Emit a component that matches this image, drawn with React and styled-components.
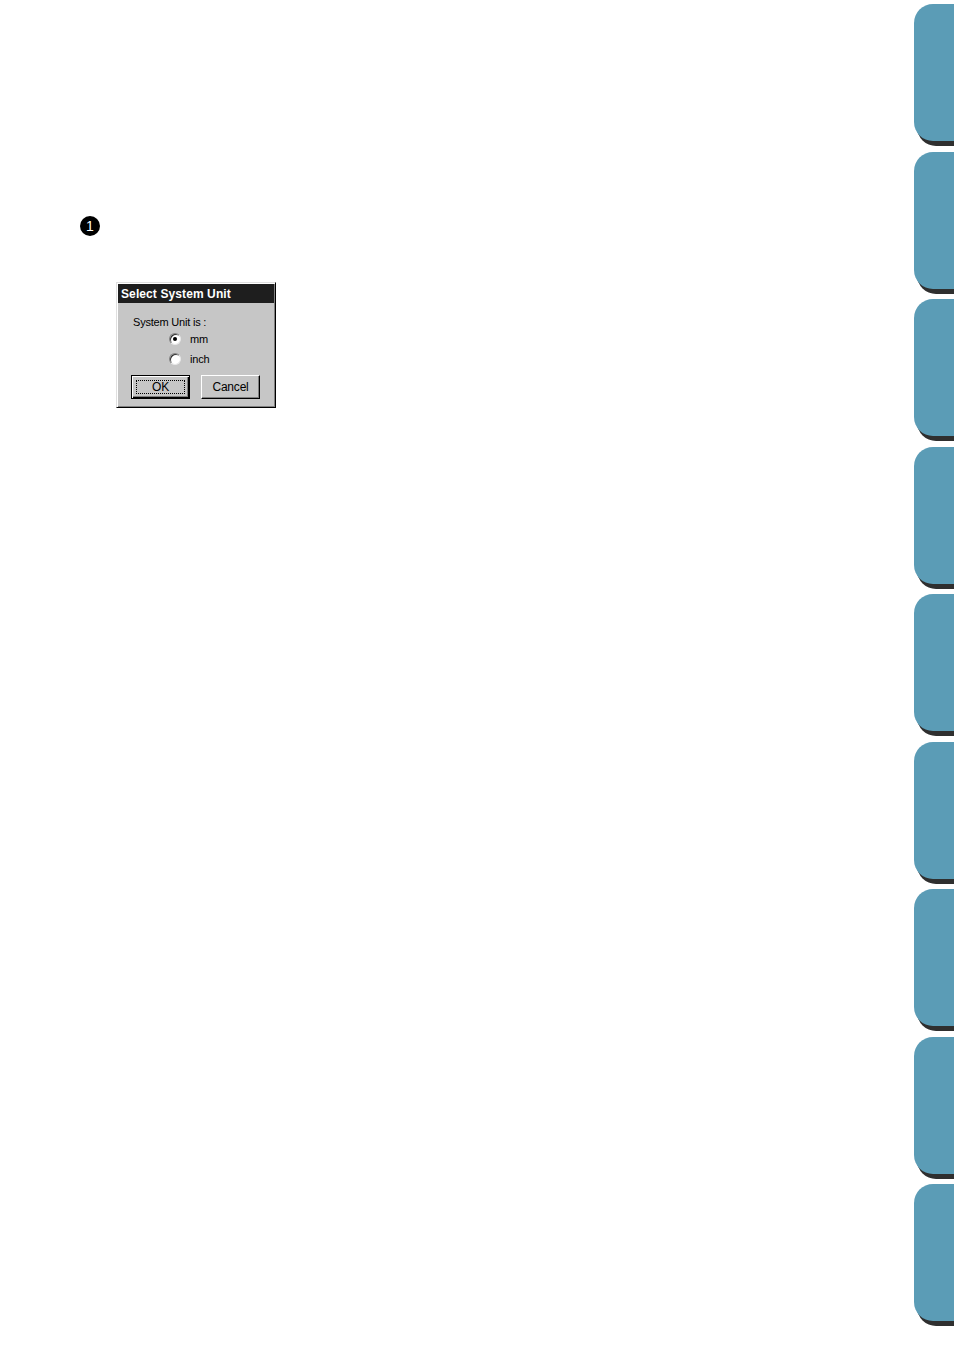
import React from "react";
import styled, { createGlobalStyle } from "styled-components";

const Global = createGlobalStyle`
  html, body { margin: 0; padding: 0; background: #fff; }
  body { font-family: "Liberation Sans", Arial, sans-serif; }
`;

const Page = styled.div`
  display: flex;
  width: 954px;
  height: 1348px;
  overflow: hidden;
  background: #fff;
`;

const Content = styled.main`
  flex: 1;
  display: flex;
  flex-direction: column;
  align-items: flex-start;
  padding: 216px 0 0 80px;
`;

const StepBullet = styled.div`
  width: 20px;
  height: 20px;
  border-radius: 50%;
  background: #000;
  color: #fff;
  font: 14px "Liberation Sans", Arial, sans-serif;
  display: flex;
  align-items: center;
  justify-content: center;
  line-height: 1;
`;

const Dialog = styled.div`
  margin: 46px 0 0 36px;
  width: 160px;
  height: 126px;
  box-sizing: border-box;
  background: #c6c6c6;
  border-top: 1px solid #dfdfdf;
  border-left: 1px solid #dfdfdf;
  border-right: 1px solid #000;
  border-bottom: 1px solid #000;
  box-shadow: inset 1px 1px 0 #fff, inset -1px -1px 0 #808080;
  padding: 1px;
  display: flex;
  flex-direction: column;
  font-family: "Liberation Sans", Arial, sans-serif;
`;

const TitleBar = styled.div`
  height: 19px;
  background: #1e1e1e;
  color: #fff;
  font-weight: bold;
  font-size: 12px;
  display: flex;
  align-items: center;
  padding-left: 3px;
  letter-spacing: 0.1px;
`;

const Body = styled.div`
  flex: 1;
  display: flex;
  flex-direction: column;
  padding: 12px 0 0 0;
  font-size: 11px;
  color: #000;
`;

const Prompt = styled.div`
  padding-left: 15px;
  height: 14px;
  line-height: 14px;
  letter-spacing: -0.2px;
`;

const RadioRow = styled.label`
  display: flex;
  align-items: center;
  gap: 9px;
  height: 20px;
  padding-left: 51px;
  letter-spacing: -0.2px;
`;

const RadioCircle = styled.span`
  width: 12px;
  height: 12px;
  box-sizing: border-box;
  border-radius: 50%;
  background: #fff;
  border-top: 1px solid #808080;
  border-left: 1px solid #808080;
  border-right: 1px solid #e8e8e8;
  border-bottom: 1px solid #e8e8e8;
  box-shadow: inset 1px 1px 0 #303030;
  display: flex;
  align-items: center;
  justify-content: center;
  &::after {
    content: "";
    width: 4px;
    height: 4px;
    border-radius: 50%;
    background: ${(p) => (p.$checked ? "#000" : "transparent")};
  }
`;

const ButtonRow = styled.div`
  display: flex;
  gap: 11px;
  padding-left: 13px;
  margin-top: 6px;
`;

const Button = styled.button`
  width: 59px;
  height: 24px;
  box-sizing: border-box;
  padding: 0;
  background: #c6c6c6;
  font: 12px "Liberation Sans", Arial, sans-serif;
  color: #000;
  letter-spacing: -0.2px;
  border-top: 1px solid #fff;
  border-left: 1px solid #fff;
  border-right: 1px solid #000;
  border-bottom: 1px solid #000;
  box-shadow: inset -1px -1px 0 #808080;
  outline: none;
  position: relative;
  display: flex;
  align-items: center;
  justify-content: center;
`;

const DefaultButton = styled(Button)`
  border: 1px solid #000;
  box-shadow: inset 1px 1px 0 #fff, inset -1px -1px 0 #000, inset -2px -2px 0 #808080;
`;

const FocusRect = styled.span`
  position: absolute;
  left: 4px;
  top: 4px;
  right: 4px;
  bottom: 4px;
  border: 1px dotted #000;
`;

const TabColumn = styled.nav`
  width: 40px;
  display: flex;
  flex-direction: column;
  gap: 10.5px;
  padding-top: 4px;
`;

const Tab = styled.div`
  height: 137px;
  flex: none;
  background: #5b9cb6;
  border-radius: 19px 0 0 19px;
  box-shadow: 3px 5px 0 #2f2f2f;
`;

export default function App() {
  return (
    <>
      <Global />
      <Page>
        <Content>
          <StepBullet>1</StepBullet>
          <Dialog>
            <TitleBar>Select System Unit</TitleBar>
            <Body>
              <Prompt>System Unit is :</Prompt>
              <RadioRow>
                <RadioCircle $checked />
                mm
              </RadioRow>
              <RadioRow>
                <RadioCircle />
                inch
              </RadioRow>
              <ButtonRow>
                <DefaultButton>
                  <FocusRect />
                  OK
                </DefaultButton>
                <Button>Cancel</Button>
              </ButtonRow>
            </Body>
          </Dialog>
        </Content>
        <TabColumn>
          {Array.from({ length: 9 }).map((_, i) => (
            <Tab key={i} />
          ))}
        </TabColumn>
      </Page>
    </>
  );
}
